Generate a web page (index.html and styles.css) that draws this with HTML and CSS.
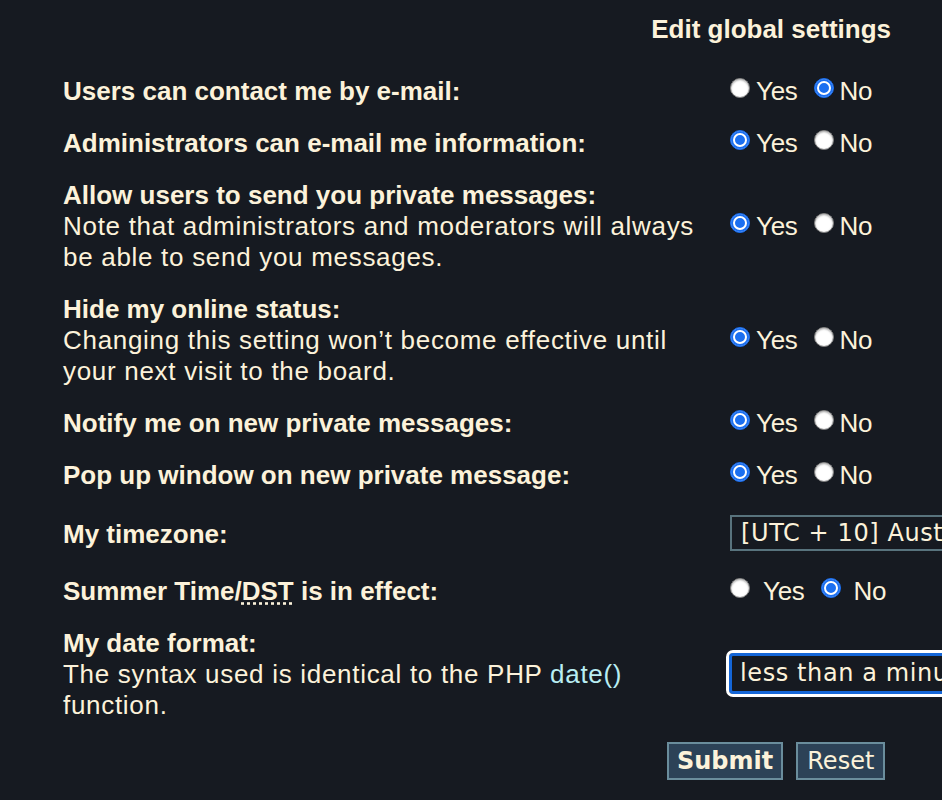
FILE: index.html
```html
<!DOCTYPE html>
<html lang="en">

<head>
    <meta charset="utf-8">
    <title>Preferences</title>
    <link rel="stylesheet" href="styles.css">
</head>

<body>
    <form class="prefs">
        <h2 class="overskrift">Edit global settings</h2>

        <div class="felter">
            <div class="label"><b>Users can contact me by e-mail:</b></div>
            <div class="valg">
                <label><input type="radio" name="viewemail"><span>Yes</span></label>
                <label><input type="radio" name="viewemail" checked><span>No</span></label>
            </div>

            <div class="label"><b>Administrators can e-mail me information:</b></div>
            <div class="valg">
                <label><input type="radio" name="massemail" checked><span>Yes</span></label>
                <label><input type="radio" name="massemail"><span>No</span></label>
            </div>

            <div class="label"><b>Allow users to send you private messages:</b><br>Note that administrators and moderators will always be able to send you messages.</div>
            <div class="valg">
                <label><input type="radio" name="allowpm" checked><span>Yes</span></label>
                <label><input type="radio" name="allowpm"><span>No</span></label>
            </div>

            <div class="label"><b>Hide my online status:</b><br>Changing this setting won’t become effective until your next visit to the board.</div>
            <div class="valg">
                <label><input type="radio" name="hideonline" checked><span>Yes</span></label>
                <label><input type="radio" name="hideonline"><span>No</span></label>
            </div>

            <div class="label"><b>Notify me on new private messages:</b></div>
            <div class="valg">
                <label><input type="radio" name="notifypm" checked><span>Yes</span></label>
                <label><input type="radio" name="notifypm"><span>No</span></label>
            </div>

            <div class="label"><b>Pop up window on new private message:</b></div>
            <div class="valg">
                <label><input type="radio" name="popuppm" checked><span>Yes</span></label>
                <label><input type="radio" name="popuppm"><span>No</span></label>
            </div>

            <div class="label hoj"><b>My timezone:</b></div>
            <div class="valg">
                <select class="boks">
                    <option>[UTC + 10] Australian Eastern Standard Time</option>
                </select>
            </div>

            <div class="label"><b>Summer Time/<abbr title="Daylight Saving Time">DST</abbr> is in effect:</b></div>
            <div class="valg luft">
                <label><input type="radio" name="dst"><span>Yes</span></label>
                <label><input type="radio" name="dst" checked><span>No</span></label>
            </div>

            <div class="label"><b>My date format:</b><br>The syntax used is identical to the PHP <a href="#">date()</a> function.</div>
            <div class="valg">
                <input type="text" class="boks aktiv" value="less than a minute ago">
            </div>
        </div>

        <div class="knapper">
            <button type="button" class="knap fed">Submit</button>
            <button type="button" class="knap">Reset</button>
        </div>
    </form>
</body>

</html>
```

FILE: styles.css
```css
* {
    margin: 0;
    padding: 0;
    box-sizing: border-box;
}

body {
    background-color: #161a21;
    color: #fcf2da;
    font-family: "Liberation Sans", Arial, sans-serif;
    font-size: 26px;
    line-height: 31px;
    letter-spacing: 0.7px;
    overflow: hidden;
    width: 942px;
    height: 800px;
}

b {
    letter-spacing: 0;
}

.prefs {
    padding-left: 63px;
    width: 1300px;
}

/* Overskrift */
.overskrift {
    width: 828px;
    text-align: right;
    font-size: 26px;
    line-height: 31px;
    letter-spacing: 0;
    padding-top: 14px;
    padding-bottom: 20px;
}

/* To kolonner: tekst og valg */
.felter {
    display: grid;
    grid-template-columns: 667px 1fr;
}

.label {
    padding: 10.5px 20px 10.5px 0;
}

.label.hoj {
    padding: 17.5px 20px 15.5px 0;
}

.valg {
    display: flex;
    align-items: center;
    gap: 16px;
}

.valg label {
    display: flex;
    align-items: center;
    gap: 6px;
    letter-spacing: -0.3px;
}

.valg.luft {
    gap: 16px;
}

.valg.luft label {
    gap: 13px;
}

/* Radioknapper */
input[type="radio"] {
    appearance: none;
    width: 20px;
    height: 20px;
    border-radius: 50%;
    background: #fff;
    border: 1px solid #7d7d7d;
    box-shadow: inset 0 1px 2px rgba(0, 0, 0, .35);
    margin-top: -6px;
}

input[type="radio"]:checked {
    background: #1b6ff0;
    border: 1px solid #1b6ff0;
    box-shadow: inset 0 0 0 2px #1b6ff0, inset 0 0 0 4px #fff;
}

abbr {
    text-decoration: underline dotted;
    text-underline-offset: 3px;
}

a {
    color: #b9eef3;
    text-decoration: none;
}

/* Felter */
.boks {
    appearance: none;
    font-family: "DejaVu Sans", Verdana, sans-serif;
    font-size: 24px;
    letter-spacing: 0.6px;
    color: #fcf2da;
    background: #161a21;
    border: 2px solid #58737d;
    height: 36px;
    width: 420px;
    padding: 0 9px;
}

.boks.aktiv {
    margin-left: -4px;
    margin-top: -2px;
    height: 47px;
    padding: 0 11px;
    border: 3px solid #fff;
    border-radius: 7px;
    box-shadow: inset 0 0 0 3px #1466d8;
    outline: none;
}

/* Knapper */
.knapper {
    display: flex;
    gap: 13px;
    padding-left: 604px;
    padding-top: 11px;
}

.knap {
    font-family: "DejaVu Sans", Verdana, sans-serif;
    font-size: 24px;
    line-height: 34px;
    letter-spacing: 0;
    color: #fcf2da;
    background: #2c4257;
    border: 2px solid #6a8d9c;
    padding: 0 9px;
}

.fed {
    font-weight: bold;
    padding: 0 8px;
}
```
